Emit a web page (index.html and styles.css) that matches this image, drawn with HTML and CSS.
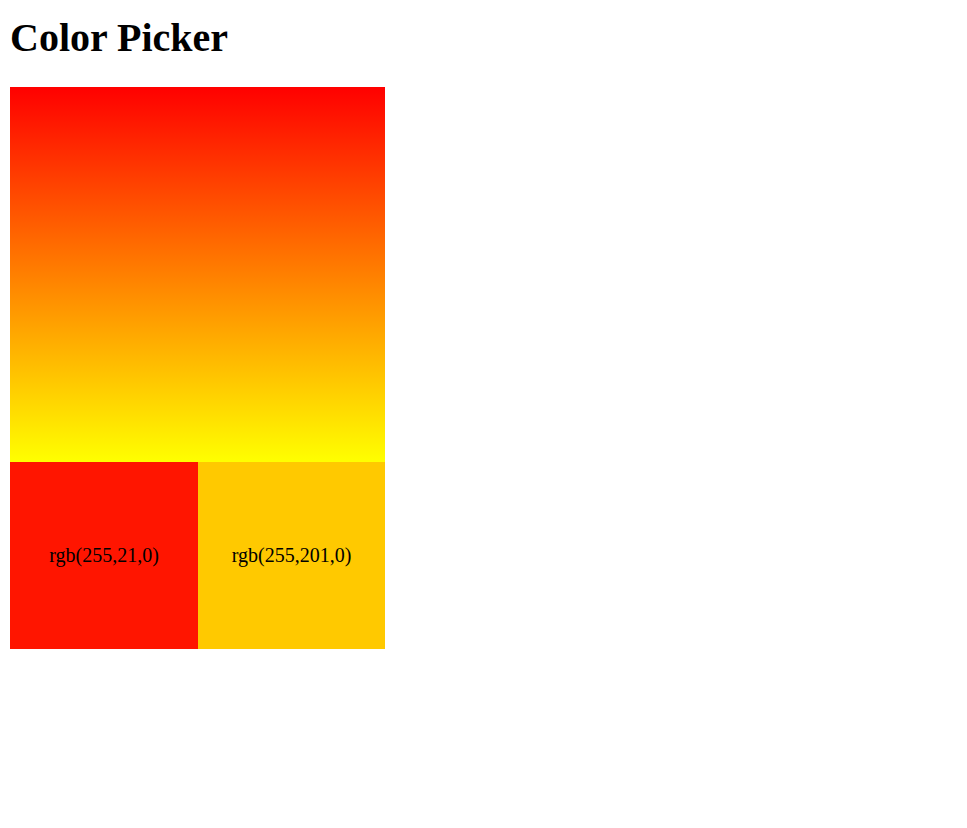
FILE: index.html
```html
<!DOCTYPE html>
<html>
<head>
<meta charset="utf-8">
<title>Color Picker</title>
<link rel="stylesheet" href="styles.css">
</head>
<body>
<h1 class="title">Color Picker</h1>
<div class="picker">
  <div class="gradient"></div>
  <div class="swatches">
    <div class="swatch swatch-a">rgb(255,21,0)</div>
    <div class="swatch swatch-b">rgb(255,201,0)</div>
  </div>
</div>
</body>
</html>
```
FILE: styles.css
```css
body {
  margin: 0;
  padding: 10px;
  font-family: "Liberation Serif", "Times New Roman", serif;
  color: #000;
  background: #fff;
}
.title {
  font-size: 40px;
  font-weight: bold;
  margin: 4px 0 26px;
}
.picker {
  width: 375px;
}
.gradient {
  height: 375px;
  background: linear-gradient(to bottom, rgb(255,0,0), rgb(255,255,0));
}
.swatches {
  display: grid;
  grid-template-columns: 188px 187px;
  height: 187px;
}
.swatch {
  display: flex;
  align-items: center;
  justify-content: center;
  font-size: 20px;
}
.swatch-a { background: rgb(255,21,0); }
.swatch-b { background: rgb(255,201,0); }
```
